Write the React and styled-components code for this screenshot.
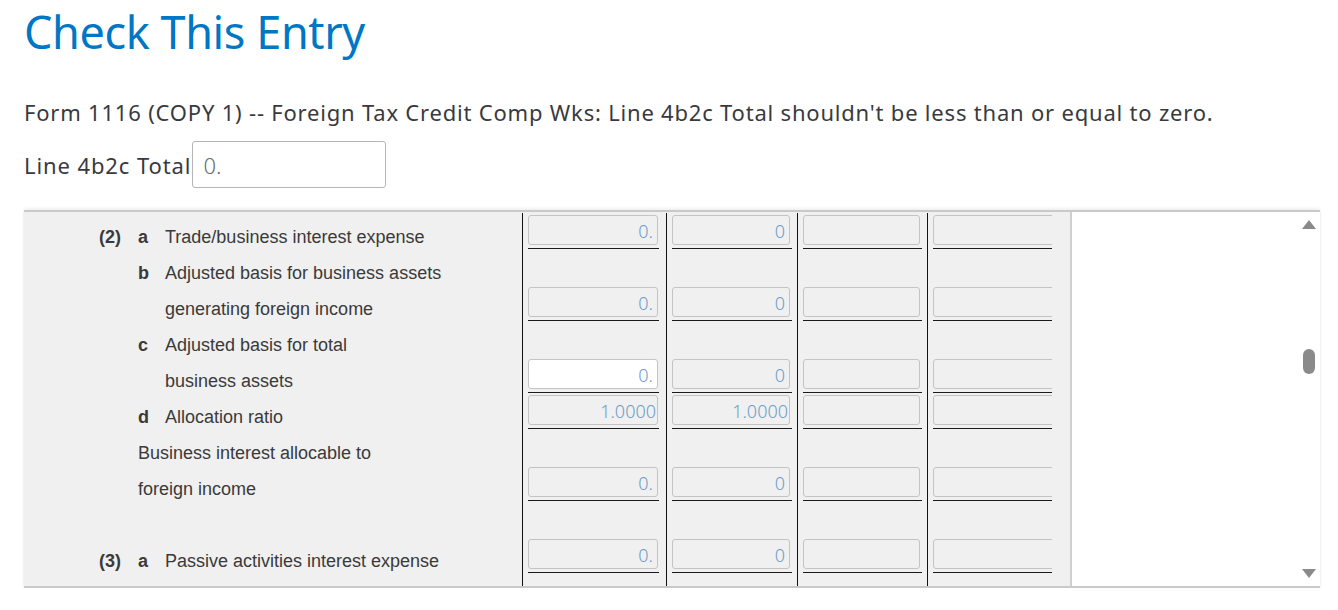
import React from "react";
import styled, { createGlobalStyle } from "styled-components";

const GlobalStyle = createGlobalStyle`
  html, body {
    margin: 0;
    padding: 0;
    background: #fff;
  }
  * {
    box-sizing: border-box;
  }
`;

// columns: width of the cell, padding left/right, width of the input box
const columns = [
  { width: 144, left: 5, right: 7, box: 130 },
  { width: 131, left: 5, right: 5, box: 118 },
  { width: 130, left: 5, right: 5, box: 117 },
  { width: 125, left: 5, right: 0, box: 130 },
];

const rows = [
  { num: "(2)", letter: "a", text: "Trade/business interest expense", values: ["0.", "0", "", ""] },
  { letter: "b", text: "Adjusted basis for business assets" },
  { text: "generating foreign income", indent: true, values: ["0.", "0", "", ""] },
  { letter: "c", text: "Adjusted basis for total" },
  { text: "business assets", indent: true, values: ["0.", "0", "", ""], active: 0 },
  { letter: "d", text: "Allocation ratio", values: ["1.0000", "1.0000", "", ""], tight: true },
  { text: "Business interest allocable to" },
  { text: "foreign income", values: ["0.", "0", "", ""] },
  {},
  { num: "(3)", letter: "a", text: "Passive activities interest expense", values: ["0.", "0", "", ""] },
  {},
];

const App = () => {
  return (
    <>
      <GlobalStyle />
      <Page>
        <Title>Check This Entry</Title>
        <Message>
          Form 1116 (COPY 1) -- Foreign Tax Credit Comp Wks: Line 4b2c Total
          shouldn't be less than or equal to zero.
        </Message>
        <FieldRow>
          <FieldLabel>Line 4b2c Total</FieldLabel>
          <FieldInput defaultValue="0." />
        </FieldRow>

        <Panel>
          <FormArea>
            <Grid>
              {rows.map((row, i) => (
                <Row key={i}>
                  <LabelCell>
                    <Num>{row.num}</Num>
                    {row.letter ? (
                      <>
                        <Letter>{row.letter}</Letter>
                        <LabelText>{row.text}</LabelText>
                      </>
                    ) : row.indent ? (
                      <>
                        <Letter />
                        <LabelText>{row.text}</LabelText>
                      </>
                    ) : (
                      <LabelText>{row.text}</LabelText>
                    )}
                  </LabelCell>
                  {columns.map((col, c) => (
                    <ValueCell key={c} $left={col.left} $right={col.right}>
                      {row.values && (
                        <Underline>
                          <ValueBox
                            $width={col.box}
                            $active={row.active === c}
                            $tight={row.tight}
                          >
                            {row.values[c]}
                          </ValueBox>
                        </Underline>
                      )}
                    </ValueCell>
                  ))}
                </Row>
              ))}
            </Grid>
          </FormArea>
          <Blank />
          <Scrollbar>
            <Arrow $up />
            <Track>
              <Thumb />
            </Track>
            <Arrow />
          </Scrollbar>
        </Panel>
      </Page>
    </>
  );
};

export default App;

const Page = styled.div`
  padding: 0 18px 0 24px;
  font-family: "Noto Sans", "Open Sans", sans-serif;
`;

const Title = styled.h1`
  margin: 0;
  padding-top: 4px;
  font-size: 45px;
  font-weight: 400;
  line-height: 56px;
  color: #0077c5;
  letter-spacing: -0.4px;
`;

const Message = styled.p`
  margin: 37px 0 0;
  font-size: 22px;
  line-height: 30px;
  color: #393a3d;
  letter-spacing: 0.8px;
`;

const FieldRow = styled.div`
  display: flex;
  align-items: center;
  margin-top: 14px;
`;

const FieldLabel = styled.span`
  font-size: 22px;
  color: #393a3d;
  letter-spacing: 0.9px;
  margin-right: 1px;
`;

const FieldInput = styled.input`
  width: 194px;
  height: 47px;
  border: 1px solid #b5b5b5;
  border-radius: 3px;
  padding: 0 10px;
  font-family: "Noto Sans", sans-serif;
  font-size: 22px;
  font-weight: 300;
  color: #6b6c72;
  background: #fff;
  outline: none;
`;

const Panel = styled.div`
  margin-top: 22px;
  height: 378px;
  display: flex;
  border-top: 2px solid #c9c9c9;
  border-bottom: 2px solid #c9c9c9;
  box-shadow: 0 -2px 3px rgba(0, 0, 0, 0.06), 0 2px 3px rgba(0, 0, 0, 0.08);
  overflow: hidden;
`;

const FormArea = styled.div`
  width: 1048px;
  flex-shrink: 0;
  background: #f0f0f0;
  border-right: 2px solid #cfcfcf;
  padding: 1px 18px 0 0;
  overflow: hidden;
`;

const Grid = styled.div`
  width: 1028px;
  overflow: hidden;
`;

const Row = styled.div`
  display: grid;
  grid-template-columns: 498px ${columns.map((c) => `${c.width}px`).join(" ")};
  height: 36px;
`;

const LabelCell = styled.div`
  display: flex;
  align-items: flex-end;
  padding: 0 0 1px 75px;
  font-family: "Liberation Sans", Arial, sans-serif;
  font-size: 18px;
  line-height: 21px;
  color: #3a3a3a;
`;

const Num = styled.span`
  width: 39px;
  font-weight: 700;
  flex-shrink: 0;
`;

const Letter = styled.span`
  width: 27px;
  font-weight: 700;
  flex-shrink: 0;
`;

const LabelText = styled.span`
  white-space: nowrap;
`;

const ValueCell = styled.div`
  border-left: 1px solid #111;
  padding: 2px ${(p) => p.$right}px 0 ${(p) => p.$left}px;
  overflow: hidden;
`;

const Underline = styled.div`
  border-bottom: 2px solid #1a1a1a;
  padding-bottom: 3px;
  height: 35px;
  overflow: hidden;
`;

const ValueBox = styled.div`
  width: ${(p) => p.$width}px;
  height: 30px;
  border: 1px solid #c4c4c4;
  border-radius: 3px;
  background: ${(p) => (p.$active ? "#fff" : "#f0f0f0")};
  text-align: right;
  padding-right: ${(p) => (p.$tight ? 1 : 4)}px;
  font-family: "Noto Sans", sans-serif;
  font-weight: 300;
  font-size: 18px;
  line-height: 30px;
  color: #6e9cc6;
`;

const Blank = styled.div`
  flex: 1;
  background: #fff;
`;

const Scrollbar = styled.div`
  width: 22px;
  display: flex;
  flex-direction: column;
  align-items: center;
  padding: 8px 0 8px;
  background: #fff;
`;

const Arrow = styled.div`
  width: 0;
  height: 0;
  border-left: 7px solid transparent;
  border-right: 7px solid transparent;
  ${(p) =>
    p.$up
      ? "border-bottom: 9px solid #8a8a8a;"
      : "border-top: 9px solid #8a8a8a;"}
`;

const Track = styled.div`
  flex: 1;
  width: 100%;
  display: flex;
  justify-content: center;
  padding-top: 120px;
`;

const Thumb = styled.div`
  width: 12px;
  height: 25px;
  border-radius: 6px;
  background: #8a8a8a;
`;
